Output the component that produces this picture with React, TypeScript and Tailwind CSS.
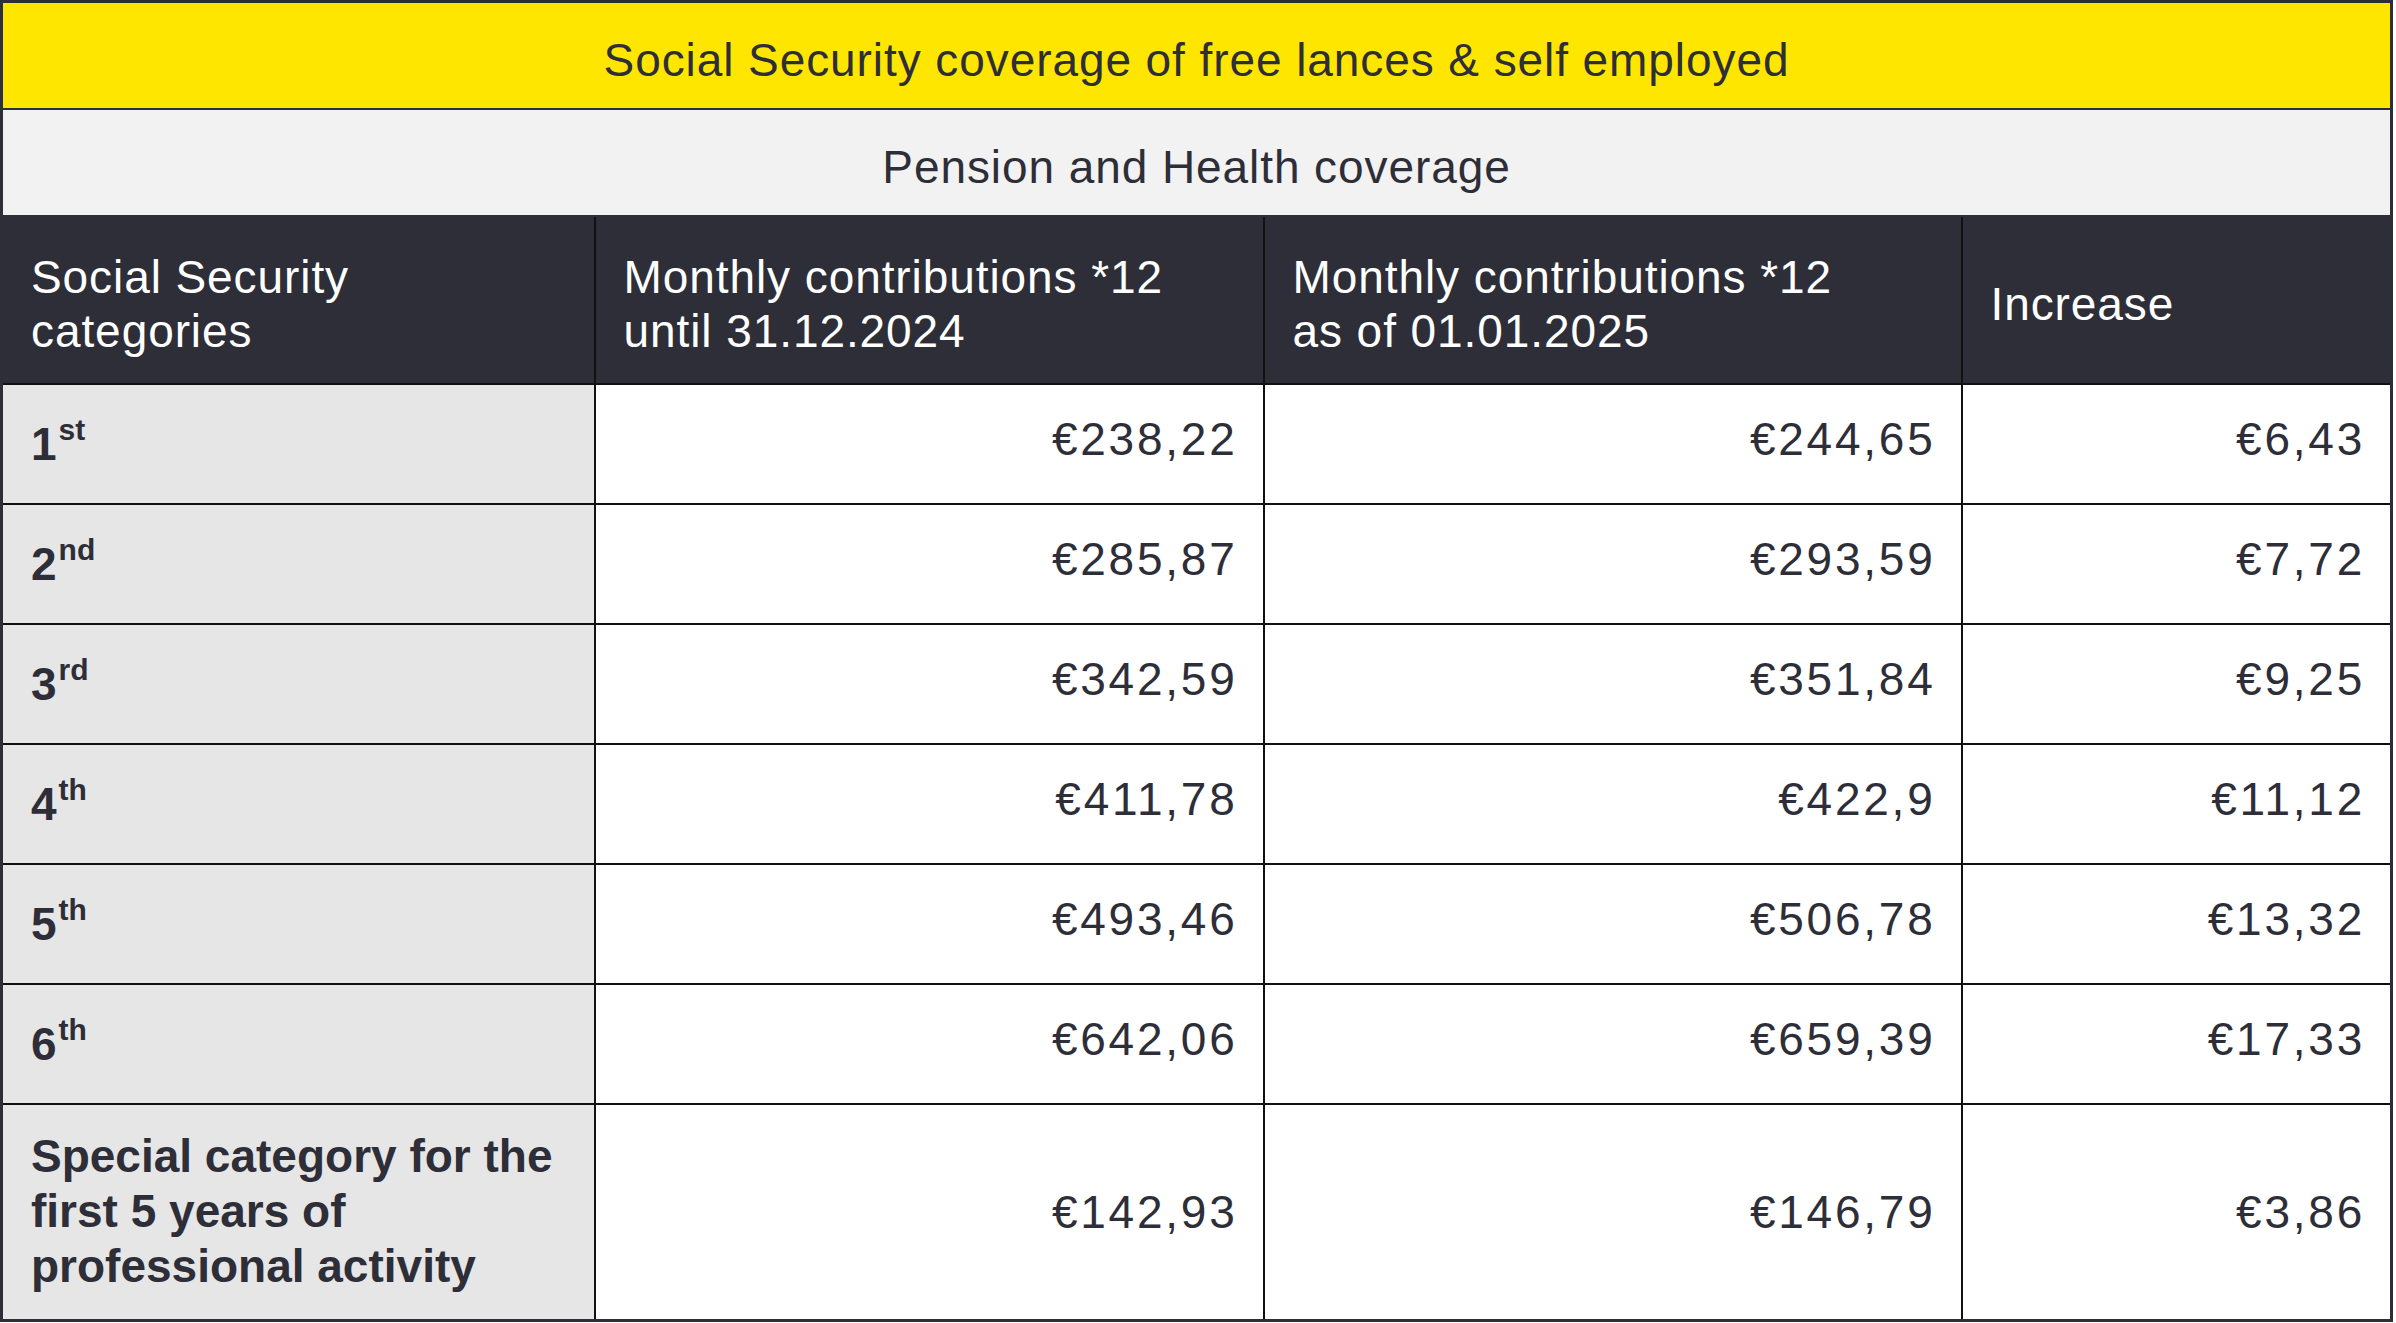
import React from 'react';

const rows = [
  { n: '1', sup: 'st', a: '€238,22', b: '€244,65', c: '€6,43' },
  { n: '2', sup: 'nd', a: '€285,87', b: '€293,59', c: '€7,72' },
  { n: '3', sup: 'rd', a: '€342,59', b: '€351,84', c: '€9,25' },
  { n: '4', sup: 'th', a: '€411,78', b: '€422,9', c: '€11,12' },
  { n: '5', sup: 'th', a: '€493,46', b: '€506,78', c: '€13,32' },
  { n: '6', sup: 'th', a: '€642,06', b: '€659,39', c: '€17,33' },
];

export default function App() {
  const cell = 'border-2 border-[#111111] pl-[28px] pr-[25px] pb-[8px] text-right align-middle tracking-[0.06em]';
  const lastCell = 'border-2 border-[#111111] pl-[28px] pr-[25px] pt-[2px] text-right align-middle tracking-[0.06em]';
  const head = 'border-2 border-[#111111] px-[28px] pt-[8px] align-middle';
  return (
    <div className="bg-white min-h-screen font-['Liberation_Sans',Arial,sans-serif] text-[#2e2e38] text-[46px] tracking-[0.02em]">
      <table className="w-[2393px] table-fixed border-collapse border-[3px] border-[#2e2e38]">
        <colgroup>
          <col className="w-[593px]" />
          <col className="w-[669px]" />
          <col className="w-[698px]" />
          <col />
        </colgroup>
        <tbody>
          <tr className="h-[107px]">
            <td colSpan={4} className="bg-[#ffe600] border-2 border-[#2e2e38] pt-[10px] text-center align-middle leading-none">
              Social Security coverage of free lances &amp; self employed
            </td>
          </tr>
          <tr className="h-[107px]">
            <td colSpan={4} className="bg-[#f2f2f2] border-2 border-[#2e2e38] pt-[9px] text-center align-middle leading-none">
              Pension and Health coverage
            </td>
          </tr>
          <tr className="h-[168px] bg-[#2e2e38] text-white leading-[54px]">
            <td className={head}>Social Security<br />categories</td>
            <td className={head}>Monthly contributions *12<br />until 31.12.2024</td>
            <td className={head}>Monthly contributions *12<br />as of 01.01.2025</td>
            <td className={head}>Increase</td>
          </tr>
          {rows.map(r => (
            <tr key={r.n} className="h-[120px]">
              <td className="bg-[#e6e6e6] border-2 border-[#111111] px-[28px] align-middle font-bold leading-none tracking-normal">
                {r.n}<sup className="text-[30px] top-[-0.66em] ml-[2px]">{r.sup}</sup>
              </td>
              <td className={cell}>{r.a}</td>
              <td className={cell}>{r.b}</td>
              <td className={cell}>{r.c}</td>
            </tr>
          ))}
          <tr className="h-[217px]">
            <td className="bg-[#e6e6e6] border-2 border-[#111111] px-[28px] align-middle font-bold leading-[55px] tracking-normal">
              Special category for the<br />first 5 years of<br />professional activity
            </td>
            <td className={lastCell}>€142,93</td>
            <td className={lastCell}>€146,79</td>
            <td className={lastCell}>€3,86</td>
          </tr>
        </tbody>
      </table>
    </div>
  );
}
